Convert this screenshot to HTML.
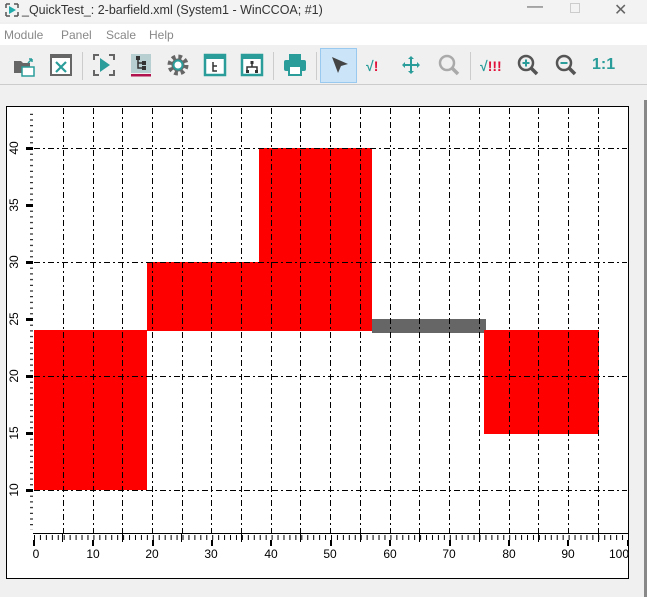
<!DOCTYPE html>
<html><head><meta charset="utf-8"><style>
*{margin:0;padding:0;box-sizing:border-box}
body{width:647px;height:597px;background:#f0f0f0;font-family:"Liberation Sans",sans-serif;position:relative;overflow:hidden}
.title{position:absolute;left:0;top:0;width:647px;height:22px;background:#f3f3f3;font-size:12.5px;color:#333}
.menu{position:absolute;left:0;top:24px;width:647px;height:21px;background:#fff;font-size:12px;color:#888}
.menu span{position:absolute;top:4px}
.tb{position:absolute;left:0;top:46px;width:647px;height:39px;background:#f0f0f0;border-bottom:1px solid #ccc}
.ic{position:absolute;top:5px;width:28px;height:28px}
.sep{position:absolute;top:6px;width:1px;height:28px;background:#ccc}
</style></head><body>
<div class="title">
<svg style="position:absolute;left:4px;top:2px" width="16" height="16"><path d="M2 2h4M2 2v4M14 2h-4M14 2v4M2 14h4M2 14v-4M14 14h-4M14 14v-4" stroke="#555" stroke-width="1.5" fill="none"/><path d="M5 4l7 4-7 4z" fill="#2aa"/></svg>
<span style="position:absolute;left:22px;top:3px">_QuickTest_: 2-barfield.xml (System1 - WinCCOA; #1)</span>
<span style="position:absolute;left:527px;top:-2px;font-size:16px;color:#666">—</span>
<span style="position:absolute;left:570px;top:3px;width:10px;height:10px;border:1px solid #ccc"></span>
<span style="position:absolute;left:614px;top:0px;font-size:16px;color:#666">✕</span>
</div>
<div class="menu"><span style="left:4px">Module</span><span style="left:61px">Panel</span><span style="left:106px">Scale</span><span style="left:149px">Help</span></div>
<div class="tb">
<svg class="ic" style="left:10px" viewBox="0 0 28 28"><path d="M4 10h7l2 2h7v10H4z" fill="#666"/><rect x="12" y="16" width="12" height="9" fill="#fff" stroke="#2a9d9a" stroke-width="1.5"/><path d="M18 12l4-4m0 0h-3m3 0v3" stroke="#2a9d9a" stroke-width="1.5" fill="none"/></svg>
<svg class="ic" style="left:47px" viewBox="0 0 28 28"><rect x="4" y="4" width="20" height="20" fill="#fff" stroke="#666" stroke-width="2"/><rect x="4" y="4" width="20" height="3" fill="#666"/><path d="M9 11l10 10M19 11L9 21" stroke="#2a9d9a" stroke-width="2.2"/></svg>
<div class="sep" style="left:82px"></div>
<svg class="ic" style="left:90px" viewBox="0 0 28 28"><path d="M4 9V4h5M19 4h5v5M4 19v5h5M19 24h5v-5" stroke="#666" stroke-width="2" fill="none"/><path d="M10 7l10 7-10 7z" fill="#2a9d9a"/></svg>
<svg class="ic" style="left:127px" viewBox="0 0 28 28"><rect x="4" y="3" width="20" height="19" fill="#b7cfd0"/><path d="M11 7v10h5M11 12h5" stroke="#333" stroke-width="1.5" fill="none"/><rect x="9" y="5" width="4" height="4" fill="#333"/><rect x="15" y="10" width="4" height="4" fill="#333"/><rect x="15" y="15" width="4" height="4" fill="#333"/><rect x="4" y="23" width="20" height="2.5" fill="#b0134d"/></svg>
<svg class="ic" style="left:164px" viewBox="0 0 28 28"><circle cx="14" cy="14" r="8" fill="none" stroke="#666" stroke-width="5" stroke-dasharray="3.5 2.8"/><circle cx="14" cy="14" r="6.5" fill="#666"/><circle cx="14" cy="14" r="4.5" fill="#fff" stroke="#2a9d9a" stroke-width="2"/></svg>
<svg class="ic" style="left:201px" viewBox="0 0 28 28"><rect x="4" y="4" width="20" height="20" fill="#fff" stroke="#2a9d9a" stroke-width="2.5"/><rect x="4" y="4" width="20" height="4" fill="#2a9d9a"/><path d="M12 11v9h4M12 15h4" stroke="#333" stroke-width="1.5" fill="none"/></svg>
<svg class="ic" style="left:238px" viewBox="0 0 28 28"><rect x="4" y="4" width="20" height="20" fill="#fff" stroke="#2a9d9a" stroke-width="2.5"/><rect x="4" y="4" width="20" height="4" fill="#2a9d9a"/><path d="M14 12v4M9 19v-3h10v3" stroke="#333" stroke-width="1.5" fill="none"/><rect x="8" y="19" width="3" height="3" fill="#333"/><rect x="17" y="19" width="3" height="3" fill="#333"/><rect x="12.5" y="10" width="3" height="3" fill="#333"/></svg>
<div class="sep" style="left:273px"></div>
<svg class="ic" style="left:281px" viewBox="0 0 28 28"><rect x="8" y="3" width="12" height="6" fill="#2a9d9a"/><rect x="3" y="9" width="22" height="11" rx="2" fill="#2a9d9a"/><rect x="8" y="15" width="12" height="9" fill="#fff" stroke="#2a9d9a" stroke-width="2"/></svg>
<div class="sep" style="left:316px"></div>
<div style="position:absolute;left:320px;top:2px;width:37px;height:35px;background:#cce4f7;border:1px solid #99c9ef"></div>
<svg class="ic" style="left:325px" viewBox="0 0 28 28"><path d="M7 6l16 7-7 2-3 7z" fill="#444"/></svg>
<span style="position:absolute;left:366px;top:12px;font-weight:bold;font-size:14px;color:#2a9d9a">√<span style="color:#e0103a">!</span></span>
<svg class="ic" style="left:397px" viewBox="0 0 28 28"><path d="M14 6v16M6 14h16" stroke="#2a9d9a" stroke-width="2"/><path d="M14 5l-3 3h6zM14 23l-3-3h6zM5 14l3-3v6zM23 14l-3-3v6z" fill="#2a9d9a"/></svg>
<svg class="ic" style="left:435px" viewBox="0 0 28 28"><circle cx="12" cy="12" r="7" fill="none" stroke="#aaa" stroke-width="2.5"/><path d="M17 17l6 6" stroke="#aaa" stroke-width="3.5"/></svg>
<div class="sep" style="left:470px"></div>
<span style="position:absolute;left:480px;top:12px;font-weight:bold;font-size:14px;color:#2a9d9a">√<span style="color:#e0103a">!!!</span></span>
<svg class="ic" style="left:514px" viewBox="0 0 28 28"><circle cx="12" cy="12" r="7" fill="none" stroke="#555" stroke-width="2.5"/><path d="M17 17l6 6" stroke="#555" stroke-width="3.5"/><path d="M8.5 12h7M12 8.5v7" stroke="#2a9d9a" stroke-width="2"/></svg>
<svg class="ic" style="left:552px" viewBox="0 0 28 28"><circle cx="12" cy="12" r="7" fill="none" stroke="#555" stroke-width="2.5"/><path d="M17 17l6 6" stroke="#555" stroke-width="3.5"/><path d="M8.5 12h7" stroke="#2a9d9a" stroke-width="2"/></svg>
<span style="position:absolute;left:592px;top:10px;font-weight:bold;font-size:16px;color:#2a9d9a">1:1</span>
</div>
<svg style="position:absolute;left:0;top:0" width="647" height="597">
<defs>
<pattern id="xt" x="34" y="0" width="5.94" height="597" patternUnits="userSpaceOnUse"><rect x="0" y="535" width="1" height="5" fill="#000"/></pattern>
<pattern id="yt" x="0" y="148" width="647" height="11.4" patternUnits="userSpaceOnUse"><rect x="28" y="0" width="5" height="1" fill="#000"/><rect x="30" y="5.7" width="3" height="1" fill="#000"/></pattern>
</defs>
<rect x="6.5" y="106.5" width="622" height="472" fill="#fff" stroke="#000"/>
<rect x="34" y="330" width="113" height="160" fill="#f00"/>
<rect x="147" y="262" width="112" height="69" fill="#f00"/>
<rect x="259" y="148" width="113" height="183" fill="#f00"/>
<rect x="372" y="319" width="114" height="14" fill="#666"/>
<rect x="484" y="330" width="115" height="104" fill="#f00"/>
<g stroke="#000" stroke-width="1" stroke-dasharray="6,3,2,3">
<path d="M63.5 108V533M93.5 108V533M122.5 108V533M152.5 108V533M182.5 108V533M211.5 108V533M241.5 108V533M271.5 108V533M300.5 108V533M330.5 108V533M360.5 108V533M390.5 108V533M419.5 108V533M449.5 108V533M479.5 108V533M509.5 108V533M538.5 108V533M568.5 108V533M598.5 108V533"/>
<path d="M34 148.5H627M34 262.5H627M34 376.5H627M34 490.5H627"/>
</g>
<rect x="30" y="110" width="5" height="420" fill="url(#yt)"/>
<rect x="30" y="534" width="599" height="7" fill="url(#xt)"/>
<g fill="#000">
<rect x="33" y="533" width="596" height="1"/>
<rect x="26" y="147" width="7" height="3"/><rect x="26" y="204" width="7" height="3"/><rect x="26" y="261" width="7" height="3"/><rect x="26" y="318" width="7" height="3"/><rect x="26" y="375" width="7" height="3"/><rect x="26" y="432" width="7" height="3"/><rect x="26" y="489" width="7" height="3"/>
<rect x="33" y="540" width="2" height="6"/><rect x="92" y="540" width="2" height="6"/><rect x="152" y="540" width="2" height="6"/><rect x="211" y="540" width="2" height="6"/><rect x="270" y="540" width="2" height="6"/><rect x="330" y="540" width="2" height="6"/><rect x="389" y="540" width="2" height="6"/><rect x="449" y="540" width="2" height="6"/><rect x="508" y="540" width="2" height="6"/><rect x="567" y="540" width="2" height="6"/><rect x="627" y="540" width="2" height="6"/>
<rect x="62" y="533" width="1" height="9"/><rect x="122" y="533" width="1" height="9"/><rect x="181" y="533" width="1" height="9"/><rect x="241" y="533" width="1" height="9"/><rect x="300" y="533" width="1" height="9"/><rect x="360" y="533" width="1" height="9"/><rect x="419" y="533" width="1" height="9"/><rect x="479" y="533" width="1" height="9"/><rect x="538" y="533" width="1" height="9"/><rect x="598" y="533" width="1" height="9"/>
</g>
<g font-family="Liberation Sans, sans-serif" font-size="12" fill="#000" text-anchor="middle">
<text x="36" y="558">0</text><text x="93" y="558">10</text><text x="152" y="558">20</text><text x="211" y="558">30</text><text x="271" y="558">40</text><text x="330" y="558">50</text><text x="390" y="558">60</text><text x="449" y="558">70</text><text x="509" y="558">80</text><text x="568" y="558">90</text><text x="619" y="558">100</text>
<text transform="translate(18,148) rotate(-90)">40</text><text transform="translate(18,205) rotate(-90)">35</text><text transform="translate(18,262) rotate(-90)">30</text><text transform="translate(18,319) rotate(-90)">25</text><text transform="translate(18,376) rotate(-90)">20</text><text transform="translate(18,433) rotate(-90)">15</text><text transform="translate(18,490) rotate(-90)">10</text>
</g>
<rect x="644" y="100" width="3" height="497" fill="#888"/>
</svg>
</body></html>
